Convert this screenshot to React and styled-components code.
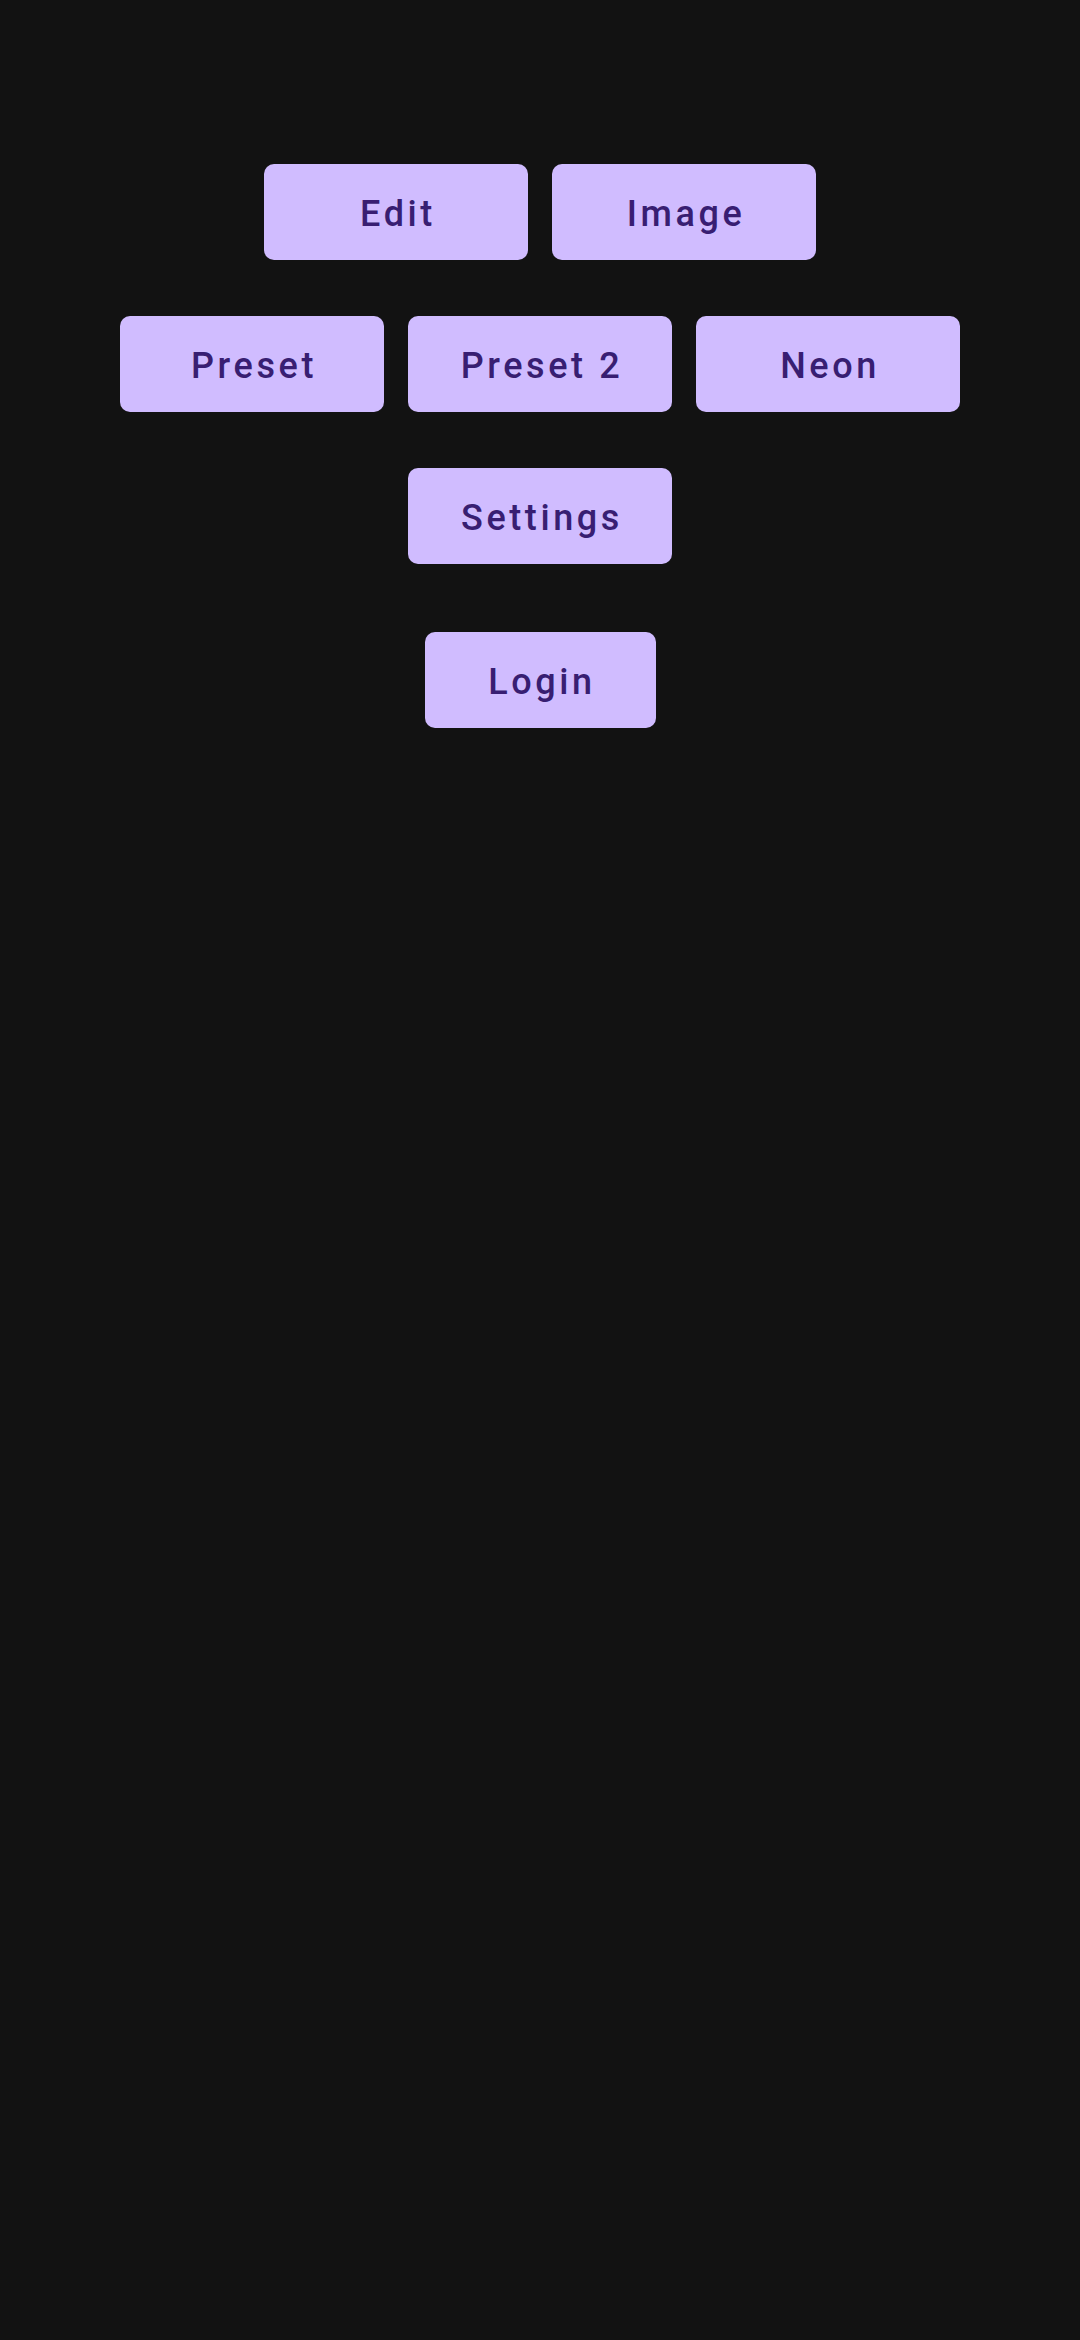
import React from "react"
import styled, { createGlobalStyle } from "styled-components"

const GlobalStyle = createGlobalStyle`
  html, body {
    margin: 0;
    padding: 0;
    background-color: #121212;
  }
  body {
    font-family: Roboto, "Noto Sans", "Liberation Sans", sans-serif;
  }
`

const Screen = styled.div`
  width: 1080px;
  min-height: 2340px;
  background-color: #121212;
  padding-top: 164px;
  box-sizing: border-box;
  display: flex;
  flex-direction: column;
  align-items: center;
  gap: 56px;
`

const Row = styled.div`
  display: flex;
  justify-content: center;
  gap: 24px;
  margin-top: ${props => props.$extra || 0}px;
`

const Button = styled.button`
  width: ${props => props.$width || 264}px;
  height: 96px;
  border: none;
  border-radius: 10px;
  background-color: #d0bcff;
  color: #381e72;
  font-family: Roboto, "Noto Sans", "Liberation Sans", sans-serif;
  font-size: 36px;
  font-weight: 500;
  letter-spacing: 0.1em;
  padding: 4px 0 0 4px;
  cursor: pointer;

  &:focus {
    outline: none;
  }
`

function App() {
  return (
    <>
      <GlobalStyle />
      <Screen>
        <Row>
          <Button>Edit</Button>
          <Button>Image</Button>
        </Row>
        <Row>
          <Button>Preset</Button>
          <Button>Preset 2</Button>
          <Button>Neon</Button>
        </Row>
        <Row>
          <Button>Settings</Button>
        </Row>
        <Row $extra={12}>
          <Button $width={231}>Login</Button>
        </Row>
      </Screen>
    </>
  )
}

export default App
